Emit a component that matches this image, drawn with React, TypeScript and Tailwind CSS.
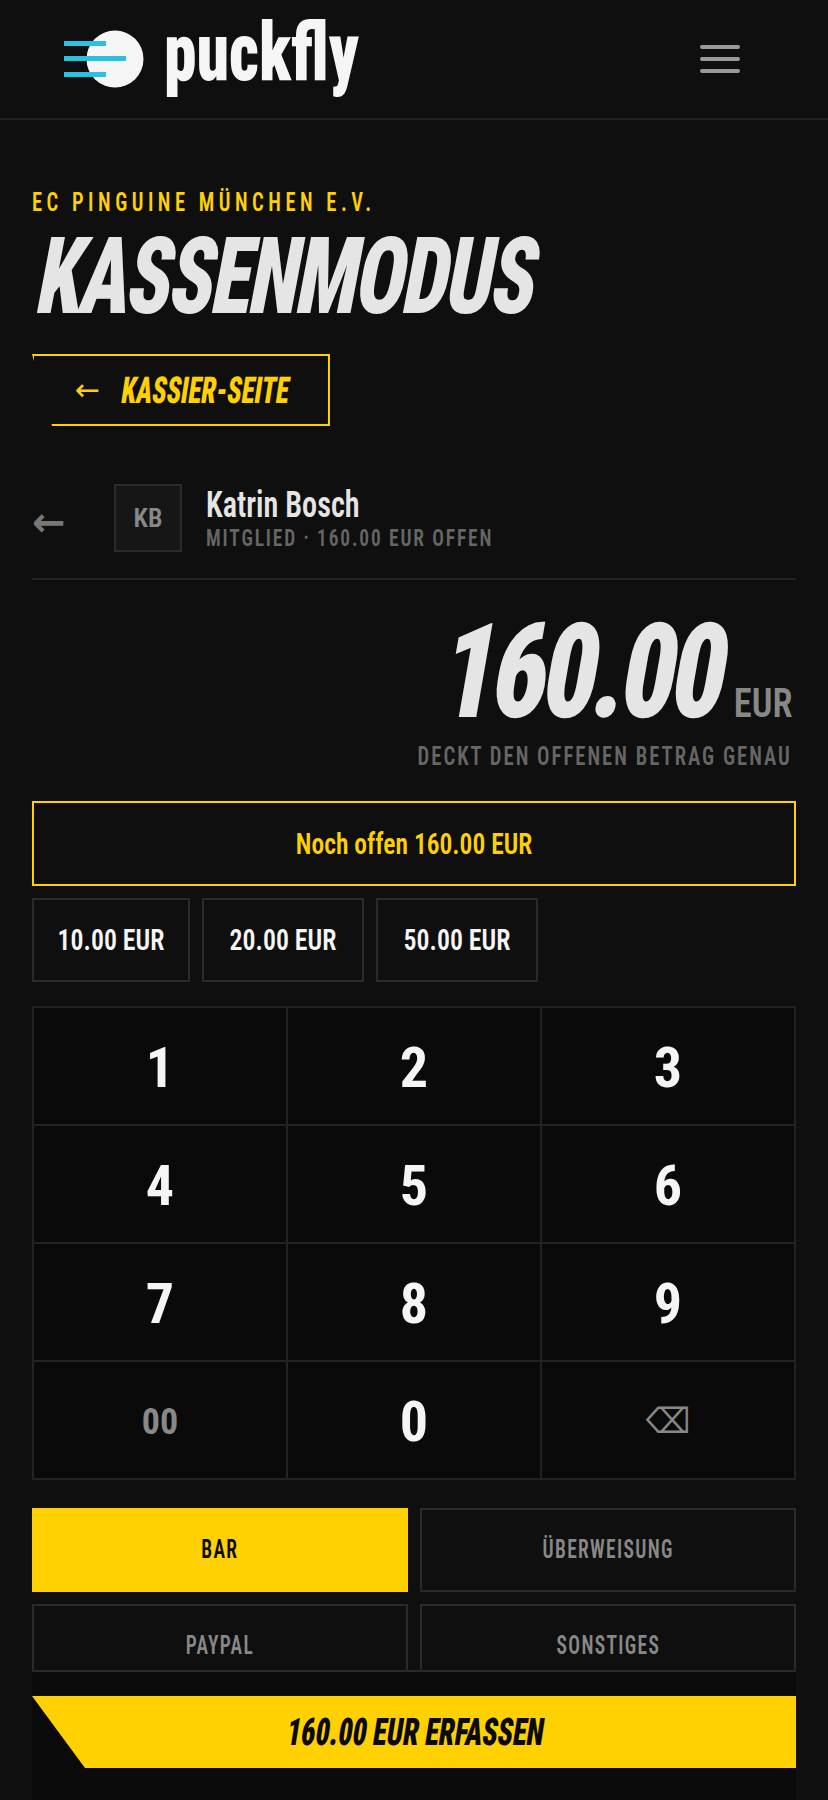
const cond = "font-['Roboto',sans-serif] [font-stretch:75%] whitespace-nowrap";
const arrow = "font-['DejaVu_Sans',sans-serif]";

const keys = ["1", "2", "3", "4", "5", "6", "7", "8", "9"];

function Logo() {
  return (
    <svg width="80" height="60" viewBox="0 0 80 60" className="shrink-0">
      <circle cx="51" cy="30" r="28.5" fill="#f5f5f5" />
      <rect x="0" y="12" width="42" height="5" fill="#29c0e2" />
      <rect x="0" y="27" width="62" height="5" fill="#29c0e2" />
      <rect x="0" y="43" width="42" height="5" fill="#29c0e2" />
    </svg>
  );
}

function Method({ label, active }: { label: string; active?: boolean }) {
  return (
    <div
      className={`h-[84px] flex items-center justify-center ${
        active ? "bg-[#ffd100] text-[#0a0a0a]" : "border-2 border-[#2a2a2a] text-[#888888]"
      }`}
    >
      <span className={`text-[25px] font-semibold tracking-[1.7px] scale-x-[0.78] ${cond}`}>{label}</span>
    </div>
  );
}

export default function App() {
  return (
    <div className="h-[1800px] overflow-hidden bg-[#0f0f0f] text-[#f5f5f5]">
      <header className="h-[120px] flex items-center justify-between pl-16 pr-[88px] border-b-2 border-[#222222]">
        <div className="flex items-center gap-5">
          <Logo />
          <span className={`inline-block mb-[15px] text-[82px] leading-none font-black scale-x-[0.8] origin-left w-[200px] ${cond}`}>
            puckfly
          </span>
        </div>
        <div className="flex flex-col gap-2">
          <span className="block w-10 h-1 rounded-sm bg-[#999999]" />
          <span className="block w-10 h-1 rounded-sm bg-[#999999]" />
          <span className="block w-10 h-1 rounded-sm bg-[#999999]" />
        </div>
      </header>

      <main className="px-8">
        <div className={`mt-[69px] text-[25px] leading-[28px] font-semibold text-[#ffd100] tracking-[5.5px] origin-left scale-x-[0.82] ${cond}`}>
          EC PINGUINE MÜNCHEN E.V.
        </div>
        <h1 className={`mt-[12px] ml-2 h-[95px] text-[107px] leading-[96px] font-black text-[#e5e5e5] tracking-[-3px] origin-left scale-x-[0.76] skew-x-[-14deg] ${cond}`}>
          KASSENMODUS
        </h1>

        <div className="mt-[30px] w-[298px] h-[72px] border-2 border-[#ffd100] flex items-center [clip-path:polygon(0_0,100%_0,100%_100%,20px_100%)]">
          <span className={`ml-[41px] w-[47px] shrink-0 text-[30px] leading-none text-[#ffd100] ${arrow}`}>←</span>
          <span className={`inline-block origin-left text-[37px] leading-none font-black text-[#ffd100] scale-x-[0.71] skew-x-[-12deg] ${cond}`}>
            KASSIER-SEITE
          </span>
        </div>

        <div className="mt-[58px] pb-[26px] border-b-2 border-[#222222] flex items-center">
          <span className={`w-[82px] mt-2 text-[40px] leading-none font-bold text-[#777777] ${arrow}`}>←</span>
          <div className={`w-[68px] h-[68px] pt-px bg-[#161616] border-2 border-[#2a2a2a] flex items-center justify-center text-[26px] font-semibold text-[#888888] ${cond}`}>
            KB
          </div>
          <div className={`ml-6 ${cond}`}>
            <div className="text-[36px] leading-[40px] font-semibold text-[#e5e5e5] origin-left scale-x-[0.84]">Katrin Bosch</div>
            <div className="text-[24px] leading-[26px] font-semibold text-[#666666] tracking-[2.3px] origin-left scale-x-[0.81]">MITGLIED · 160.00 EUR OFFEN</div>
          </div>
        </div>

        <div className={`mt-[44px] h-[96px] flex items-baseline justify-end pr-1 ${cond}`}>
          <span className="inline-block text-[132px] leading-[96px] font-black text-[#e5e5e5] tracking-[-6px] origin-right scale-x-[0.82] skew-x-[-12deg]">160.00</span>
          <span className="ml-[3px] text-[40px] leading-[40px] font-semibold text-[#888888] origin-right scale-x-[0.91]">EUR</span>
        </div>
        <div className={`mt-[23px] pr-[5px] text-right text-[25px] leading-[28px] font-semibold text-[#666666] tracking-[2.4px] origin-right scale-x-[0.827] ${cond}`}>
          DECKT DEN OFFENEN BETRAG GENAU
        </div>

        <div className="mt-[30px] h-[85px] border-2 border-[#ffd100] flex items-center justify-center">
          <span className={`text-[30px] font-semibold text-[#ffd100] scale-x-[0.85] ${cond}`}>Noch offen 160.00 EUR</span>
        </div>

        <div className={`mt-3 flex gap-3 text-[29px] font-semibold text-[#f5f5f5] ${cond}`}>
          <div className="w-[158px] h-[84px] pt-0.5 border-2 border-[#2a2a2a] flex items-center justify-center"><span className="scale-x-[0.89]">10.00 EUR</span></div>
          <div className="w-[162px] h-[84px] pt-0.5 border-2 border-[#2a2a2a] flex items-center justify-center"><span className="scale-x-[0.89]">20.00 EUR</span></div>
          <div className="w-[162px] h-[84px] pt-0.5 border-2 border-[#2a2a2a] flex items-center justify-center"><span className="scale-x-[0.89]">50.00 EUR</span></div>
        </div>

        <div className={`mt-[24px] grid grid-cols-3 border-2 border-[#222222] bg-[#222222] gap-0.5 ${cond}`}>
          {keys.map((k) => (
            <div key={k} className="h-[116px] pt-[3px] bg-[#0a0a0a] flex items-center justify-center text-[56px] font-bold text-[#f5f5f5]">
              {k}
            </div>
          ))}
          <div className="h-[116px] pt-[3px] bg-[#0a0a0a] flex items-center justify-center text-[36px] font-bold text-[#888888]">00</div>
          <div className="h-[116px] pt-[3px] bg-[#0a0a0a] flex items-center justify-center text-[56px] font-bold text-[#f5f5f5]">0</div>
          <div className={`h-[116px] pt-[3px] bg-[#0a0a0a] flex items-center justify-center text-[35px] text-[#888888] ${arrow}`}>⌫</div>
        </div>

        <div className="mt-7 grid grid-cols-2 gap-3">
          <Method label="BAR" active />
          <Method label="ÜBERWEISUNG" />
          <div className="h-[66px] overflow-hidden">
            <Method label="PAYPAL" />
          </div>
          <div className="h-[66px] overflow-hidden">
            <Method label="SONSTIGES" />
          </div>
        </div>

        <div className="h-[131px] pt-6 bg-[#0a0a0a] border-t-2 border-[#2a2a2a]">
          <div className="h-[72px] pl-1 bg-[#ffd100] flex items-center justify-center [clip-path:polygon(0_0,100%_0,100%_100%,53px_100%)]">
            <span className={`text-[38px] font-black text-[#0a0a0a] scale-x-[0.735] skew-x-[-12deg] ${cond}`}>160.00 EUR ERFASSEN</span>
          </div>
        </div>
      </main>
    </div>
  );
}
